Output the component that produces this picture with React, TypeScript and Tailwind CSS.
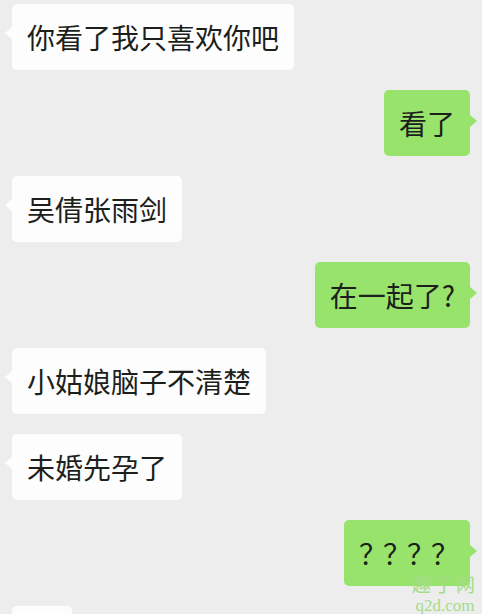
const messages: { side: "left" | "right"; text: string }[] = [
  { side: "left", text: "你看了我只喜欢你吧" },
  { side: "right", text: "看了" },
  { side: "left", text: "吴倩张雨剑" },
  { side: "right", text: "在一起了?" },
  { side: "left", text: "小姑娘脑子不清楚" },
  { side: "left", text: "未婚先孕了" },
  { side: "right", text: "？？？？" },
  { side: "left", text: "" },
];

function Bubble({ side, text }: { side: "left" | "right"; text: string }) {
  const left = side === "left";
  return (
    <div className={left ? "flex justify-start pl-3" : "flex justify-end pr-3"}>
      <div
        className={
          "relative h-[66px] flex items-center px-[15px] rounded-[5px] " +
          (left ? "bg-[#fdfdfd]" : "bg-[#97e36b]") +
          (text ? "" : " w-[60px]")
        }
      >
        {left ? (
          <span className="absolute -left-[7px] top-[22px] w-0 h-0 border-y-[7px] border-y-transparent border-r-[8px] border-r-[#fdfdfd]" />
        ) : (
          <span className="absolute -right-[7px] top-[24px] w-0 h-0 border-y-[7px] border-y-transparent border-l-[8px] border-l-[#97e36b]" />
        )}
        <span
          className={
            "text-[28px] leading-none text-[#1c1f1b] whitespace-nowrap " +
            (text === "？？？？" ? "tracking-[-4px]" : "")
          }
        >
          {text}
        </span>
      </div>
    </div>
  );
}

export default function App() {
  return (
    <div
      className="relative w-[482px] h-[614px] overflow-hidden bg-[#ededed] pt-1 flex flex-col gap-5"
      style={{ fontFamily: '"Noto Sans CJK SC", "Noto Sans", sans-serif' }}
    >
      {messages.map((m, i) => (
        <Bubble key={i} side={m.side} text={m.text} />
      ))}

      <div className="absolute right-[4px] bottom-0 flex flex-col items-center gap-[4px] text-[#a6dc88]">
        <span className="text-[19px] leading-[20px] tracking-[3px]">趣丁网</span>
        <span className="text-[17px] leading-[16px]" style={{ fontFamily: '"Liberation Serif", serif' }}>
          q2d.com
        </span>
      </div>
    </div>
  );
}
